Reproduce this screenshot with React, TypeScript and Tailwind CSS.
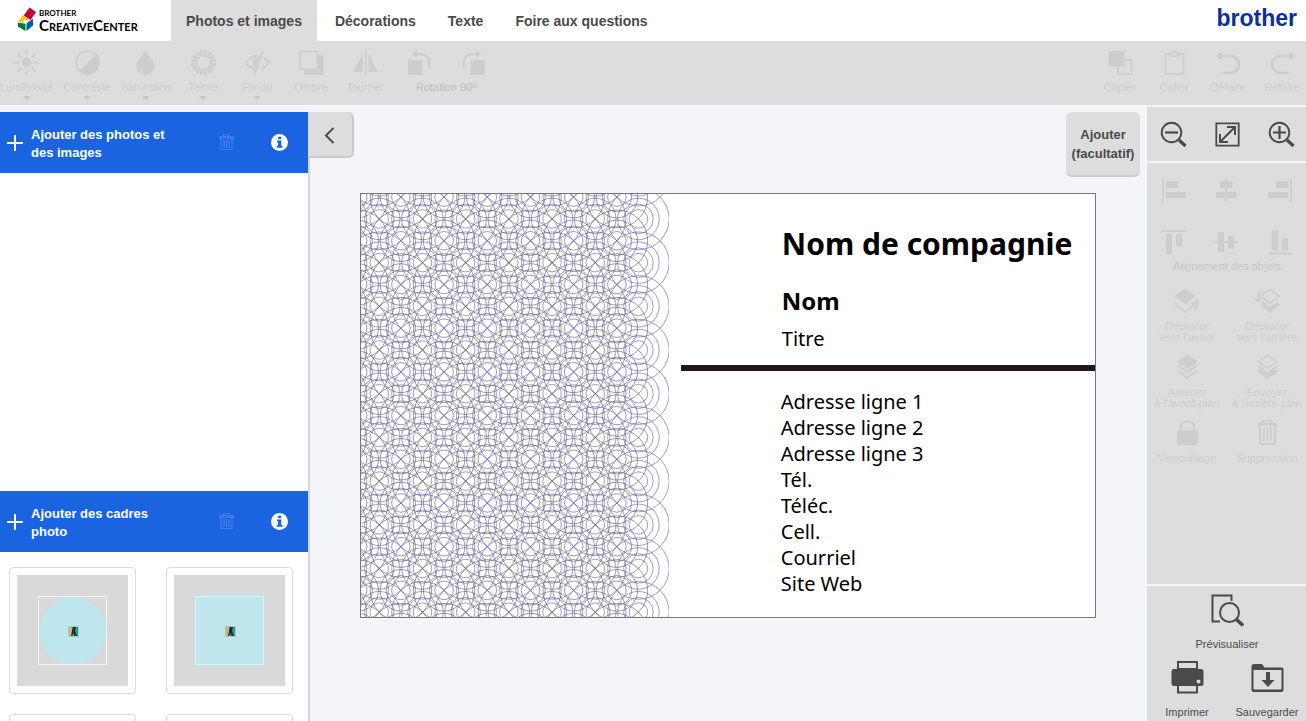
import React from "react";

type IconProps = { children: React.ReactNode; size?: number; className?: string };

function Icon({ children, size = 25, className = "" }: IconProps) {
  return (
    <svg width={size} height={size} viewBox={`0 0 ${size} ${size}`} fill="currentColor" className={`block shrink-0 ${className}`} aria-hidden="true">
      {children}
    </svg>
  );
}

const rays = (n: number, from: number, to: number) =>
  Array.from({ length: n }, (_, i) => {
    const a = (i * 2 * Math.PI) / n;
    return `M${12.5 + from * Math.cos(a)} ${12.5 + from * Math.sin(a)}L${12.5 + to * Math.cos(a)} ${12.5 + to * Math.sin(a)}`;
  }).join("");

const Sun = () => (
  <Icon>
    <circle cx="12.5" cy="12.5" r="4.7" />
    <path d={rays(8, 7.4, 12.5)} stroke="currentColor" strokeWidth="2" />
  </Icon>
);
const Contrast = () => (
  <Icon>
    <circle cx="12.5" cy="12.5" r="11.5" fill="none" stroke="currentColor" strokeWidth="1.6" />
    <path d="M21 4A12 12 0 0 1 4 21Z" />
  </Icon>
);
const Drop = () => (
  <Icon>
    <path fillRule="evenodd" d="M12.5 0C15 6 21.500 11 21.500 16.500a9 8.500 0 0 1-18 0C3.500 11 10 6 12.500 0ZM6.500 15c-1 4 1.500 7.500 5 8-2.500-2-4-4.500-5-8Z" />
  </Icon>
);
const Wheel = () => (
  <Icon>
    <circle cx="12.5" cy="12.5" r="9.4" fill="none" stroke="currentColor" strokeWidth="6" />
    <path d={rays(16, 7, 13)} stroke="#dddddd" strokeWidth="1" />
    <circle cx="12.5" cy="12.5" r="6.8" fill="none" stroke="currentColor" strokeWidth="1" />
  </Icon>
);
const EyeOff = () => (
  <Icon>
    <path d="M9.500 19.500C6 18 3 15.500 1.200 12.700 4 8.500 8 6 12.500 5.800M18.500 7.500c2 1.200 4 3 5.300 5.200-1.700 2.700-4 4.600-6.500 5.900" fill="none" stroke="currentColor" strokeWidth="2" />
    <path d="M15 5.800C10 5.500 7.500 9 7.500 12.500c0 3 1.200 4.500 3 5.500Z" />
    <path d="M18 .8 9 24.500" stroke="currentColor" strokeWidth="2.200" />
  </Icon>
);
const Shadow = () => (
  <Icon>
    <path d="M19 5h5.500v20H5v-5h14Z" />
    <path d="M1.200 1.700h17.300v17.300H1.200Z" fill="none" stroke="currentColor" strokeWidth="1.700" />
  </Icon>
);
const Mirror = () => (
  <Icon>
    <path d="M10 4v18H0ZM15.500 4v18h9.500ZM12 0h1.700v25H12Z" />
  </Icon>
);
const RotateLeft = () => (
  <Icon>
    <path d="M1 10h14.500v15H1ZM5 4.200 10 0v8.400Z" />
    <path d="M9 4.200h5.500c5 0 7.800 4 7.800 9V19" fill="none" stroke="currentColor" strokeWidth="1.900" />
  </Icon>
);
const RotateRight = () => (
  <Icon>
    <path d="M24 10H9.500v15H24ZM20 4.200 15 0v8.400Z" />
    <path d="M16 4.200h-5.500c-5 0-7.800 4-7.800 9V19" fill="none" stroke="currentColor" strokeWidth="1.900" />
  </Icon>
);
const Copy = () => (
  <Icon>
    <path d="M.500 1h16v15.500H.500Z" />
    <path d="M17 10h6.500v14.200H10V17" fill="none" stroke="currentColor" strokeWidth="1.800" />
  </Icon>
);
const Paste = () => (
  <Icon>
    <path d="M3.400 4h18.200v20H3.400Z" fill="none" stroke="currentColor" strokeWidth="1.800" />
    <path d="M8 6.200V3.500h2.500C10.500 0 14.500 0 14.500 3.500H17v2.700Z" fill="#dddddd" stroke="currentColor" strokeWidth="1.500" />
  </Icon>
);
const Undo = () => (
  <Icon>
    <path d="M0 6 6 1v10Z" />
    <path d="M5 6h9.500a8.500 8.500 0 0 1 0 17H6.500" fill="none" stroke="currentColor" strokeWidth="2.700" />
  </Icon>
);
const Redo = () => (
  <Icon>
    <path d="m25 6-6-5v10Z" />
    <path d="M20 6h-9.500a8.500 8.500 0 0 0 0 17h8" fill="none" stroke="currentColor" strokeWidth="2.700" />
  </Icon>
);
const Magnifier = ({ plus }: { plus?: boolean }) => (
  <Icon size={27}>
    <circle cx="11.500" cy="11.500" r="9.800" fill="none" stroke="currentColor" strokeWidth="1.900" />
    <path d="m19 19 6.500 6" stroke="currentColor" strokeWidth="3.200" />
    <path d={plus ? "M5 11.500h13M11.500 5v13" : "M5 11.500h13"} stroke="currentColor" strokeWidth="2.200" />
  </Icon>
);
const Fit = () => (
  <Icon size={25}>
    <path d="M1.300 1.300h22.400v22.400H1.300Z" fill="none" stroke="currentColor" strokeWidth="1.800" />
    <path d="M5.500 19.500 19.500 5.500M12 5h8v8M5 12v8h8" fill="none" stroke="currentColor" strokeWidth="2" />
  </Icon>
);
const AlignIcon = ({ d }: { d: string }) => (
  <Icon>
    <path d={d} />
  </Icon>
);
const alignments = [
  { label: "Aligner à gauche", d: "M0 0h1.700v24H0ZM4 3.300h12.300V10H4ZM4 14h20v6H4Z" },
  { label: "Centrer horizontalement", d: "M11.300 0h1.700v24h-1.700ZM6 3.300h12.500V10H6ZM2 14h20.300v6H2Z" },
  { label: "Aligner à droite", d: "M23.300 0H25v24h-1.700ZM9 3.300h12.300V10H9ZM1 14h20.300v6H1Z" },
  { label: "Aligner en haut", d: "M0 0h24v2H0ZM4 4h6v20H4ZM14 4h6.300v12.300H14Z" },
  { label: "Centrer verticalement", d: "M0 11.300h24V13H0ZM4 2h6v20.300H4ZM14 6h6v12.500h-6Z" },
  { label: "Aligner en bas", d: "M1 22.500h24v1.900H1ZM4.700 0H11v20.300H4.700ZM14.700 8H21v12.300h-6.300Z" },
];
const Forward = () => (
  <Icon>
    <path d="m10 0 10.500 8L10 16-.500 8Z" />
    <path d="m1.500 14.500-1 2L10 23.800l9.300-7.100-2.800-2.200" fill="none" stroke="currentColor" strokeWidth="1.800" />
    <path d="M19 20.500c3 0 3-3 3-6.500" fill="none" stroke="currentColor" strokeWidth="2" />
    <path d="m18.500 15.500 3.300-5 3.200 4.500Z" />
  </Icon>
);
const Backward = () => (
  <Icon>
    <path d="m15 25 10-8.500-3-2.500-7 5.300L8 14l-3 2.500Z" />
    <path d="m15 1.200 9.300 7.100-9.300 7.200-9.300-7.200Z" fill="none" stroke="currentColor" strokeWidth="1.600" />
    <path d="M6.500 4c-3 .500-3.500 3-3.500 7" fill="none" stroke="currentColor" strokeWidth="2" />
    <path d="M-.500 10.500h7L3 15Z" />
  </Icon>
);
const ToFront = () => (
  <Icon>
    <path d="m12.500 0 10.500 7.500-10.500 7.500L2 7.500Z" />
    <path d="m3 11.300 9.500 7 9.500-7M3 16.800l9.500 7 9.500-7" fill="none" stroke="currentColor" strokeWidth="2" />
  </Icon>
);
const ToBack = () => (
  <Icon>
    <path d="m12.500 25 10.500-7.500-3.500-2.500-7 5-7-5L2 17.500Z" />
    <path d="m12.500 1.300 9.300 6.400-9.300 6.400-9.300-6.400ZM3 12.200l9.500 6.800 9.500-6.800" fill="none" stroke="currentColor" strokeWidth="1.600" />
  </Icon>
);
const Lock = () => (
  <Icon>
    <path d="M2 10.500h21V23q0 2-2 2H4q-2 0-2-2Z" />
    <path d="M5.800 11V8c0-9 13.400-9 13.400 0v3" fill="none" stroke="currentColor" strokeWidth="2" />
  </Icon>
);
const Trash = () => (
  <Icon>
    <path d="M2.500 3h20v2.200h-20ZM7 3.500V1q0-1 1-1h9q1 0 1 1v2.500h-1.800V1.600H8.800v1.900Z" />
    <path d="M5 5v17.500q0 1.500 1.500 1.500h12q1.500 0 1.500-1.500V5" fill="none" stroke="currentColor" strokeWidth="1.800" />
    <path d="M9 7.500v13.500M12.500 7.500v13.500M16 7.500v13.500" stroke="currentColor" strokeWidth="1.600" />
  </Icon>
);
const SmallTrash = () => (
  <Icon size={17}>
    <path d="M1.500 2.800h14v1.300h-14ZM5.500 2.800V.8h6v2M3 4v11.500h11V4" fill="none" stroke="currentColor" strokeWidth="1.100" />
    <path d="M6 6v8M8.500 6v8M11 6v8" stroke="currentColor" strokeWidth="1.300" />
  </Icon>
);
const Preview = () => (
  <Icon size={33}>
    <path d="M9 27.500H1.500v-26h19V7" fill="none" stroke="currentColor" strokeWidth="2" />
    <circle cx="18.500" cy="18.500" r="9.500" fill="none" stroke="currentColor" strokeWidth="2" />
    <path d="m25 25 7 6.500" stroke="currentColor" strokeWidth="3.600" />
  </Icon>
);
const Printer = () => (
  <Icon size={33}>
    <path fillRule="evenodd" d="M6 0h21v8h3q2.500 0 2.500 2.500v12Q32.500 25 30 25h-3v7.500H6V25H3Q.500 25 .500 22.500v-12Q.500 8 3 8h3ZM8 2v5h17V2ZM8 25v5.500h17V25ZM27.500 18.500a2 2 0 1 0 0 4 2 2 0 0 0 0-4Z" />
  </Icon>
);
const Save = () => (
  <Icon size={33}>
    <path d="M.500 5.500Q.500 3 3 3h8l2.500 3.500H31q1.500 0 1.500 1.500v21q0 2-2 2h-28q-2 0-2-2ZM2.500 9v18.500q0 1 1 1h26q1 0 1-1V9Z" fillRule="evenodd" />
    <path d="M15 11h4v8h4.500L17 26l-6.500-7H15Z" />
  </Icon>
);

function Tool({ label, icon, caret }: { label: string; icon: React.ReactNode; caret?: boolean }) {
  return (
    <button type="button" className="flex min-w-11 flex-col items-center text-[#cdcdcd]">
      {icon}
      <span className="mt-1.5 text-[11px] leading-3 whitespace-nowrap">{label}</span>
      {caret && <span className="mt-[3px] border-x-4 border-t-4 border-x-transparent border-t-[#c8c8c8]" />}
    </button>
  );
}

function SideTool({ lines, icon }: { lines: string[]; icon: React.ReactNode }) {
  return (
    <button type="button" className="flex flex-col items-center text-[#cdcdcd]">
      {icon}
      <span className="mt-2 flex flex-col text-[11px] leading-[11px] whitespace-nowrap">
        {lines.map((l) => (
          <span key={l}>{l}</span>
        ))}
      </span>
    </button>
  );
}

function SectionHeader({ title, info }: { title: string; info: string }) {
  return (
    <div className="flex h-[61px] shrink-0 items-center bg-[#1b64e1] text-white">
      <button type="button" className="flex flex-1 items-center gap-2 pl-[7px] text-left">
        <Icon size={16}>
          <path d="M0 7h16v2H0ZM7 0h2v16H7Z" />
        </Icon>
        <span className="w-[150px] pt-0.5 text-[13px] leading-[18px] font-bold">{title}</span>
      </button>
      <button type="button" aria-label="Supprimer" className="mr-9 text-[#477fe8]">
        <SmallTrash />
      </button>
      <button type="button" aria-label={info} className="mr-5">
        <Icon size={17}>
          <circle cx="8.500" cy="8.500" r="8.500" />
          <path d="M6 6.500h4.300V12h1.200v1.800H5.800V12H7V8.300H6ZM7.200 2.700h3v2.500h-3Z" fill="#1b64e1" />
        </Icon>
      </button>
    </div>
  );
}

function FrameThumb({ shape }: { shape: "circle" | "square" | "blank" }) {
  return (
    <button type="button" aria-label="Cadre photo" className="aspect-square rounded border border-[#dcdcdc] bg-white p-[7px]">
      <span className="flex size-full items-center justify-center bg-[#d9d9d9]">
        {shape !== "blank" && (
          <svg width="71" height="71" viewBox="0 0 71 71" aria-hidden="true">
            {shape === "circle" ? (
              <>
                <circle cx="36" cy="36" r="33.500" fill="#bee6ee" />
                <rect x="1.500" y="1.500" width="68" height="68" fill="none" stroke="#f2f4f4" />
              </>
            ) : (
              <rect x="1.500" y="1.500" width="68" height="68" fill="#bfe5ed" stroke="#c9fbff" />
            )}
            <rect x="31" y="31" width="11" height="11" fill="#a9c9c9" />
            <rect x="32" y="32" width="3" height="9" fill="#d9b27c" />
            <rect x="35" y="32" width="6" height="9" fill="#2f9c9c" />
            <path d="M36 32h3l-1 4 2 5h-2l-2-3-1 3h-1l1-5Z" fill="#1c2b2b" />
          </svg>
        )}
      </span>
    </button>
  );
}

const PITCH_X = 43.3;
const PITCH_Y = 43.8;
const RADII = [30.8, 20.8, 14.8, 9.3];

function lattice(x0: number, y0: number, cols: number, rows: number) {
  const points: [number, number][] = [];
  for (let c = 0; c < cols; c++) for (let r = 0; r < rows; r++) points.push([x0 + c * PITCH_X, y0 + r * PITCH_Y]);
  return points;
}

function Guilloche() {
  const sets = [
    { color: "#5c5cb0", points: lattice(18.3 - PITCH_X, 25 - PITCH_Y, 8, 12) },
    { color: "#5a5a5e", points: lattice(40 - PITCH_X, 3.1, 7, 11) },
  ];
  return (
    <svg viewBox="0 0 309 424" className="block w-[42%] shrink-0" aria-hidden="true">
      {sets.map((s) => (
        <g key={s.color} fill="none" stroke={s.color} strokeWidth="0.6">
          {s.points.flatMap(([x, y]) => RADII.map((r) => <circle key={`${x}-${y}-${r}`} cx={x} cy={y} r={r} />))}
        </g>
      ))}
    </svg>
  );
}

function Logo() {
  return (
    <a href="#accueil" className="flex w-[171px] shrink-0 items-start gap-0.5 pt-[7px] pl-[17px] text-black">
      <svg width="20" height="25" viewBox="0 0 20 25" aria-hidden="true">
        <path d="m12.500.500 6.500 4.500-5.500 8-6.800-4.500Z" fill="#c8003c" />
        <path d="m6.200 8 5.500 5-2.200 3.500L1 14.500Z" fill="#fdc400" />
        <path d="m.800 15.500 7.700 1.200V24L.800 19.500Z" fill="#007a3c" />
        <path d="m9.500 16.500 6.500-5v7L9.500 24Z" fill="#0060ac" />
        <path d="m7 12.500 4 1.200-1.800 3-3-1Z" fill="#fff" />
      </svg>
      <span className="flex flex-col pt-px font-[Lato,sans-serif] font-bold">
        <span className="text-[8px] leading-[10px]">BROTHER</span>
        <span className="text-[15px] leading-[14px] [font-variant-caps:small-caps]">CreativeCenter</span>
      </span>
    </a>
  );
}

export default function App() {
  return (
    <div className="flex h-screen flex-col overflow-hidden bg-[#f4f5f8] font-['Liberation_Sans',Arial,sans-serif] text-[#4a4a4a]">
      <header className="flex h-[41px] shrink-0 bg-white">
        <Logo />
        <nav className="flex text-[14px] font-bold">
          <a href="#photos" className="mr-0.5 flex items-center bg-[#dddddd] px-[15px] pt-0.5">Photos et images</a>
          <a href="#decorations" className="flex items-center px-4 pt-0.5">Décorations</a>
          <a href="#texte" className="flex items-center px-4 pt-0.5">Texte</a>
          <a href="#faq" className="flex items-center px-4 pt-0.5">Foire aux questions</a>
        </nav>
        <a href="#brother" className="mr-[9px] ml-auto pt-[4px] text-[23px] leading-7 font-bold text-[#0d2ea0]">brother</a>
      </header>

      <div className="flex h-16 shrink-0 items-start gap-2.5 bg-[#dddddd] pt-[9px] pr-0.5">
        <Tool label="Luminosité" icon={<Sun />} caret />
        <Tool label="Contraste" icon={<Contrast />} caret />
        <Tool label="Saturation" icon={<Drop />} caret />
        <Tool label="Teinte" icon={<Wheel />} caret />
        <Tool label="Fondu" icon={<EyeOff />} caret />
        <Tool label="Ombre" icon={<Shadow />} />
        <Tool label="Tourner" icon={<Mirror />} />
        <div className="flex flex-col items-center text-[#cdcdcd]">
          <div className="flex gap-2.5">
            <button type="button" aria-label="Rotation à gauche" className="flex w-11 justify-center"><RotateLeft /></button>
            <button type="button" aria-label="Rotation à droite" className="flex w-11 justify-center"><RotateRight /></button>
          </div>
          <span className="mt-1.5 text-[11px] leading-3 text-[#bdbdbd]">Rotation 90º</span>
        </div>
        <div className="ml-auto flex gap-2.5">
          <Tool label="Copier" icon={<Copy />} />
          <Tool label="Coller" icon={<Paste />} />
          <Tool label="Défaire" icon={<Undo />} />
          <Tool label="Refaire" icon={<Redo />} />
        </div>
      </div>

      <div className="flex min-h-0 flex-1">
        <aside className="mt-[7px] flex w-[308px] shrink-0 flex-col bg-white shadow-[2px_0_0_#d5d6d9]">
          <SectionHeader title="Ajouter des photos et des images" info="Informations sur les photos" />
          <div className="min-h-0 flex-1" />
          <SectionHeader title="Ajouter des cadres photo" info="Informations sur les cadres" />
          <div className="grid h-[169px] shrink-0 grid-cols-2 content-start gap-x-[30px] gap-y-5 overflow-hidden pt-[15px] pr-[15px] pl-[9px]">
            <FrameThumb shape="circle" />
            <FrameThumb shape="square" />
            <FrameThumb shape="blank" />
            <FrameThumb shape="blank" />
          </div>
        </aside>

        <main className="min-w-0 flex-1 pt-[7px]">
          <div className="flex items-start justify-between pr-[7px]">
            <button type="button" aria-label="Masquer le panneau" className="flex h-[46px] w-[46px] items-center justify-center rounded-r-md border-r-2 border-b-2 border-[#c9cacd] bg-[#dddddd]">
              <Icon size={17} className="mt-0.5 mr-0.5">
                <path d="M12.500 1 5 8.500l7.500 7.500" fill="none" stroke="currentColor" strokeWidth="2" />
              </Icon>
            </button>
            <button type="button" className="h-[65px] w-[74px] rounded-md border-b-2 border-[#c9cacd] bg-[#dddddd] text-[13px] leading-[19px] font-bold">
              Ajouter
              <br />
              (facultatif)
            </button>
          </div>
          <section className="mx-auto mt-4 flex w-[88%] max-w-[736px] items-stretch border border-[#77787a] bg-white font-['Noto_Sans',sans-serif] text-black">
            <Guilloche />
            <div className="flex min-w-0 flex-1 flex-col pl-3">
              <div className="flex flex-col pt-7 pl-[101px]">
                <h1 className="text-[30px] leading-[44px] font-bold whitespace-nowrap">Nom de compagnie</h1>
                <h2 className="mt-4 text-[24px] leading-[38px] font-bold">Nom</h2>
                <p className="mt-1 text-[20px] leading-[30px]">Titre</p>
              </div>
              <div className="mt-[11px] h-1.5 shrink-0 bg-[#231815]" />
              <address className="mt-[18px] pl-[100px] text-[20px] leading-[26px] not-italic">
                <p>Adresse ligne 1</p>
                <p>Adresse ligne 2</p>
                <p>Adresse ligne 3</p>
                <p>Tél.</p>
                <p>Téléc.</p>
                <p>Cell.</p>
                <p>Courriel</p>
                <p>Site Web</p>
              </address>
            </div>
          </section>
        </main>

        <aside className="mt-0.5 flex w-[159px] shrink-0 flex-col gap-0.5">
          <div className="flex h-[54px] shrink-0 items-center justify-between bg-[#dddddd] pr-[11px] pl-[13px]">
            <button type="button" aria-label="Zoom arrière"><Magnifier /></button>
            <button type="button" aria-label="Ajuster"><Fit /></button>
            <button type="button" aria-label="Zoom avant"><Magnifier plus /></button>
          </div>
          <div className="min-h-0 flex-1 bg-[#dddddd] pt-[15px] pl-px">
            <div className="grid grid-cols-3 place-items-center gap-y-[27px] text-[#cdcdcd]">
              {alignments.map((a) => (
                <button key={a.label} type="button" aria-label={a.label}>
                  <AlignIcon d={a.d} />
                </button>
              ))}
            </div>
            <p className="mt-1.5 text-center text-[11px] leading-[11px] text-[#c6c6c6]">Alignement des objets</p>
            <div className="mt-4 grid grid-cols-2 gap-x-0.5 gap-y-[11px]">
              <SideTool lines={["Déplacer", "vers l'avant"]} icon={<Forward />} />
              <SideTool lines={["Déplacer", "vers l'arrière"]} icon={<Backward />} />
              <SideTool lines={["Amener", "à l'avant-plan"]} icon={<ToFront />} />
              <SideTool lines={["Envoyer", "à l'arrière-plan"]} icon={<ToBack />} />
              <SideTool lines={["Verrouillage"]} icon={<Lock />} />
              <SideTool lines={["Suppression"]} icon={<Trash />} />
            </div>
          </div>
          <div className="shrink-0 bg-[#dddddd] pt-2 pb-[3px] pl-px text-[11px] leading-[11px]">
            <button type="button" className="mx-auto flex flex-col items-center gap-3">
              <Preview />
              Prévisualiser
            </button>
            <div className="mt-[11px] grid grid-cols-2 gap-x-0.5">
              <button type="button" className="flex flex-col items-center gap-[13px]">
                <Printer />
                Imprimer
              </button>
              <button type="button" className="flex flex-col items-center gap-[13px]">
                <Save />
                Sauvegarder
              </button>
            </div>
          </div>
        </aside>
      </div>
    </div>
  );
}
